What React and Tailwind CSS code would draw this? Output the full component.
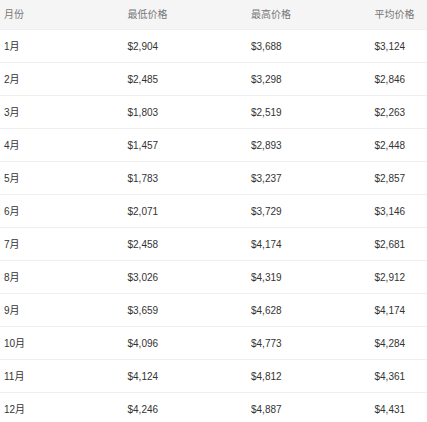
const rows = [
  ["1月", "$2,904", "$3,688", "$3,124"],
  ["2月", "$2,485", "$3,298", "$2,846"],
  ["3月", "$1,803", "$2,519", "$2,263"],
  ["4月", "$1,457", "$2,893", "$2,448"],
  ["5月", "$1,783", "$3,237", "$2,857"],
  ["6月", "$2,071", "$3,729", "$3,146"],
  ["7月", "$2,458", "$4,174", "$2,681"],
  ["8月", "$3,026", "$4,319", "$2,912"],
  ["9月", "$3,659", "$4,628", "$4,174"],
  ["10月", "$4,096", "$4,773", "$4,284"],
  ["11月", "$4,124", "$4,812", "$4,361"],
  ["12月", "$4,246", "$4,887", "$4,431"],
];

const cols = ["月份", "最低价格", "最高价格", "平均价格"];

const App = () => {
  return (
    <div
      className="w-[427px] h-[422px] overflow-hidden bg-white text-[10px]"
      style={{ fontFamily: '"Liberation Sans", "Noto Sans CJK SC", sans-serif' }}
    >
      <div className="w-[494px]">
        <div className="flex h-[30px] items-center bg-[#f5f5f5] border-b border-[#efefef] text-[#777]">
          {cols.map((c) => (
            <div key={c} className="w-[123.5px] shrink-0 pl-1">
              {c}
            </div>
          ))}
        </div>
        {rows.map((r) => (
          <div
            key={r[0]}
            className="flex h-[33px] items-center border-b border-[#efefef] text-[#333]"
          >
            {r.map((v, i) => (
              <div key={i} className="w-[123.5px] shrink-0 pl-1">
                {v}
              </div>
            ))}
          </div>
        ))}
      </div>
    </div>
  );
};

export default App;
